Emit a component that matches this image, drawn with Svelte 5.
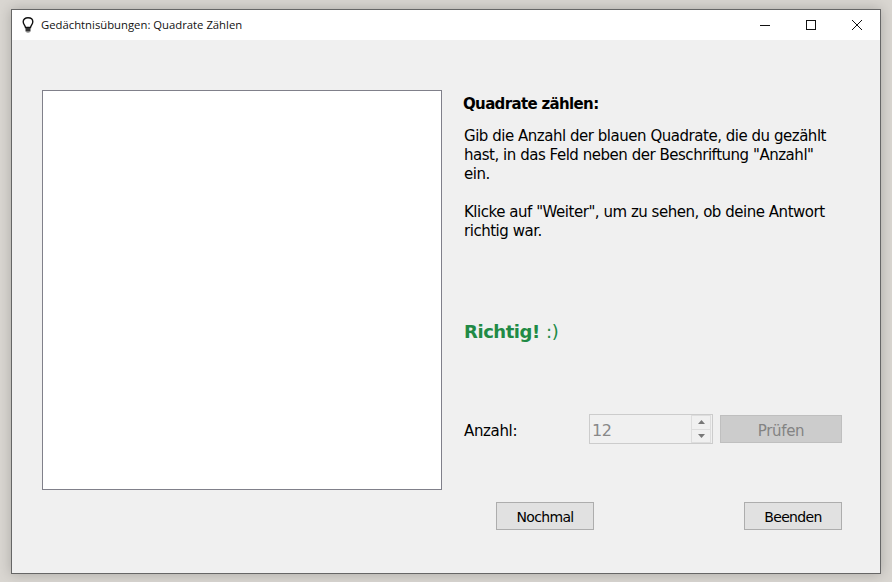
<script>
    let title = 'Gedächtnisübungen: Quadrate Zählen';
    let count = $state(12);
</script>

<div class="desktop">
    <div class="window">
        <header class="titlebar">
            <svg class="bulb" width="12" height="16" viewBox="0 0 12 16" fill="none">
                <path d="M3.5 10.5 C3.3 8.5 1.2 7.5 1.2 4.8 C1.2 2.4 3.2 0.8 6 0.8 C8.8 0.8 10.8 2.4 10.8 4.8 C10.8 7.5 8.7 8.5 8.5 10.5 Z" fill="#fff" stroke="#111" stroke-width="1.4"/>
                <rect x="3.5" y="11" width="5" height="3.5" fill="#333"/>
                <rect x="4.5" y="14.5" width="3" height="1" fill="#666"/>
            </svg>
            <span class="title">{title}</span>
            <div class="controls">
                <svg width="46" height="30" viewBox="0 0 46 30"><path d="M18 15.5 H28" stroke="#111" stroke-width="1"/></svg>
                <svg width="46" height="30" viewBox="0 0 46 30"><rect x="18.5" y="10.5" width="9" height="9" fill="none" stroke="#111" stroke-width="1"/></svg>
                <svg width="46" height="30" viewBox="0 0 46 30"><path d="M18 10 L28 20 M28 10 L18 20" stroke="#111" stroke-width="1"/></svg>
            </div>
        </header>

        <div class="content">
            <div class="canvas"></div>
            <div class="side">
                <h1>Quadrate zählen:</h1>
                <p class="intro">Gib die Anzahl der blauen Quadrate, die du gezählt<br>hast, in das Feld neben der Beschriftung "Anzahl"<br>ein.</p>
                <p class="hint">Klicke auf "Weiter", um zu sehen, ob deine Antwort<br>richtig war.</p>
                <div class="result"><b>Richtig!</b> <span class="smile">:)</span></div>
                <div class="row">
                    <span class="label">Anzahl:</span>
                    <div class="spin">
                        <span class="value">{count}</span>
                        <div class="arrows">
                            <span><svg width="7" height="4" viewBox="0 0 7 4"><path d="M3.5 0 L7 4 H0 Z" fill="#777"/></svg></span>
                            <span><svg width="7" height="4" viewBox="0 0 7 4"><path d="M0 0 H7 L3.5 4 Z" fill="#777"/></svg></span>
                        </div>
                    </div>
                    <button class="check" disabled>Prüfen</button>
                </div>
                <div class="actions">
                    <button>Nochmal</button>
                    <button>Beenden</button>
                </div>
            </div>
        </div>
    </div>
</div>

<style>
:global(body) {
    margin: 0;
}
.desktop {
    width: 892px;
    height: 582px;
    box-sizing: border-box;
    padding: 9px 11px 8px 11px;
    background: #d9d6d1;
    overflow: hidden;
    font-family: "DejaVu Sans", "Noto Sans", sans-serif;
}
.window {
    height: 100%;
    box-sizing: border-box;
    display: flex;
    flex-direction: column;
    background: #f0f0f0;
    border: 1px solid #666;
    box-shadow: 0 0 12px rgba(0, 0, 0, 0.22);
}
.titlebar {
    height: 30px;
    display: flex;
    align-items: center;
    background: #fff;
    padding-left: 10px;
    flex: none;
}
.bulb {
    margin-right: 7px;
}
.title {
    font-family: "Open Sans", sans-serif;
    font-size: 11.3px;
    color: #111;
    padding-bottom: 2px;
}
.controls {
    margin-left: auto;
    display: flex;
}
.controls svg {
    display: block;
}
.content {
    display: flex;
    padding: 50px 38px 0 30px;
}
.canvas {
    width: 398px;
    height: 398px;
    background: #fff;
    border: 1px solid #80808a;
    flex: none;
}
.side {
    margin-left: 22px;
    margin-right: 2px;
    flex: 1;
    font-size: 15px;
    color: #000;
    letter-spacing: -0.35px;
}
h1 {
    margin: 6px 0 0 -1px;
    font-size: 15px;
    font-weight: bold;
    line-height: 16px;
    letter-spacing: -0.65px;
}
p {
    margin: 0;
    line-height: 19px;
    letter-spacing: -0.47px;
}
.intro {
    margin-top: 15px;
}
.hint {
    margin-top: 19px;
}
.result {
    margin-top: 79px;
    font-size: 18px;
    line-height: 24px;
    color: #218a45;
    letter-spacing: -0.45px;
}
.smile {
    margin-left: 1px;
}
.row {
    display: flex;
    align-items: center;
    margin-top: 70px;
    height: 30px;
}
.label {
    width: 125px;
    padding-top: 4px;
}
.spin {
    width: 120px;
    height: 28px;
    display: flex;
    align-items: center;
    justify-content: space-between;
    border: 1px solid #ccc;
    color: #888;
    padding-left: 2px;
    box-sizing: content-box;
}
.value {
    font-size: 16px;
    padding-top: 2px;
}
.arrows {
    display: flex;
    flex-direction: column;
    gap: 1px;
    height: 26px;
    margin-right: 1px;
    width: 18px;
    border: 1px solid #ddd;
    background: #ddd;
}
.arrows span {
    flex: 1;
    display: flex;
    align-items: center;
    justify-content: center;
    background: #f0f0f0;
}
button {
    height: 28px;
    box-sizing: border-box;
    font-family: inherit;
    font-size: 14px;
    letter-spacing: -0.65px;
    padding: 2px 0 0;
    color: #000;
    background: #e1e1e1;
    border: 1px solid #adadad;
}
.check {
    width: 122px;
    margin-left: 7px;
    padding-top: 3px;
    font-size: 15px;
    letter-spacing: -0.35px;
    background: #ccc;
    border-color: #bfbfbf;
    color: #838383;
}
.actions {
    display: flex;
    justify-content: space-between;
    margin-top: 58px;
    padding-left: 32px;
}
.actions button {
    width: 98px;
}
</style>
